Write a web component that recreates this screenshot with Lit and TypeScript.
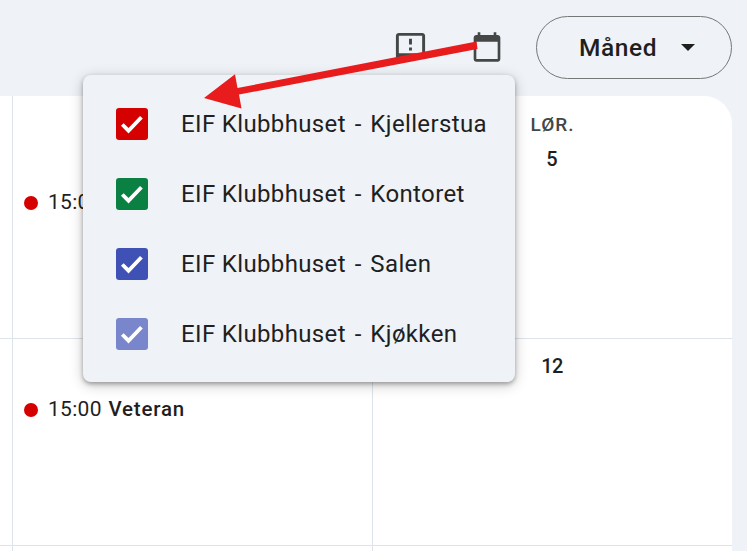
import { LitElement, html, css } from "lit";
import { customElement } from "lit/decorators.js";

const calendars = [
  { room: "Kjellerstua", tone: "red" },
  { room: "Kontoret", tone: "green" },
  { room: "Salen", tone: "blue" },
  { room: "Kjøkken", tone: "lavender" },
];

@customElement("app-root")
export class AppRoot extends LitElement {
  static styles = css`
    :host {
      display: flex;
      flex-direction: column;
      position: relative;
      width: 747px;
      height: 551px;
      overflow: hidden;
      background: #eff3f8;
      color: #1f1f1f;
      font-family: Roboto, "Liberation Sans", sans-serif;
    }
    * { box-sizing: border-box; }
    svg { display: block; }
    .toolbar {
      flex: none;
      height: 96px;
      display: flex;
      justify-content: flex-end;
      padding: 16px 15px 0 0;
    }
    .feedback { width: 35px; height: 35px; margin: 14px 43.3px 0 0; fill: #444746; }
    .toggle { width: 32px; height: 32px; margin: 15.4px 33px 0 0; fill: #444746; }
    .view {
      width: 196px;
      height: 63px;
      border: 1px solid #747775;
      border-radius: 32px;
      display: flex;
      align-items: center;
      padding-left: 42px;
      font-size: 24.5px;
      font-weight: 500;
    }
    .view-name { width: 79px; letter-spacing: 0.6px; white-space: nowrap; }
    .caret { margin-left: 23px; width: 14px; height: 7px; fill: #1f1f1f; }
    .grid {
      width: 732px;
      height: 455px;
      background: #fff;
      border-radius: 0 28px 0 0;
      display: grid;
      grid-template-columns: 13px 360px 359px;
      grid-template-rows: 243px 207px 5px;
    }
    .cell { border-right: 1px solid #dde3ea; border-bottom: 1px solid #dde3ea; }
    .cell.end { border-right: 0; }
    .cell.last { border-bottom: 0; }
    .event {
      display: flex;
      align-items: center;
      height: 24px;
      padding-left: 11px;
      font-size: 21px;
      white-space: nowrap;
    }
    .first .event { margin-top: 94px; }
    .second .event { margin-top: 58px; }
    .dot { width: 14px; height: 14px; border-radius: 50%; background: #d50000; margin: 2px 10px 0 0; }
    .time { width: 60.5px; letter-spacing: 0.3px; }
    .title { font-weight: 500; font-size: 20.5px; letter-spacing: 0.8px; }
    .weekday { width: 359px; padding-top: 17px; text-align: center; font-size: 19px; line-height: 24px; font-weight: 500; letter-spacing: 1px; color: #444746; }
    .date { width: 358px; text-align: center; font-size: 20px; line-height: 24px; font-weight: 500; }
    .first .date { margin-top: 10px; }
    .second .date { margin-top: 15px; letter-spacing: -0.5px; }
    .menu {
      position: absolute;
      left: 83px;
      top: 75px;
      width: 432px;
      height: 307px;
      padding-top: 14px;
      background: #eff3f8;
      border-radius: 8px;
      box-shadow: 0 2px 4px rgba(0,0,0,.3), 0 3px 14px rgba(0,0,0,.22);
    }
    .option { height: 70px; display: flex; align-items: center; padding-left: 33px; font-size: 24px; letter-spacing: 0.36px; white-space: nowrap; }
    .dash { margin: 0 2.3px 0 2.5px; }
    .box { width: 32px; height: 32px; border-radius: 3px; margin-right: 33px; }
    .red { background: #d50000; }
    .green { background: #0b8043; }
    .blue { background: #3f51b5; }
    .lavender { background: #7986cb; }
    .check { fill: none; stroke: #fff; stroke-width: 3.8; }
    .arrow { position: absolute; left: 0; top: 0; width: 747px; height: 120px; fill: #e81c1c; pointer-events: none; }
  `;

  private event() {
    return html`<div class="event"><span class="dot"></span><span class="time">15:00</span><span class="title">Veteran</span></div>`;
  }

  render() {
    return html`
      <header class="toolbar">
        <svg class="feedback" viewBox="0 0 24 24"><path d="M20 2H4c-1.1 0-2 .9-2 2v18l4-4h14c1.1 0 2-.9 2-2V4c0-1.1-.9-2-2-2zm0 14H4V4h16v12zM11 12h2v2h-2zM11 6h2v4h-2z"/></svg>
        <svg class="toggle" viewBox="0 0 24 24"><path d="M20 3h-1V1h-2v2H7V1H5v2H4c-1.1 0-2 .9-2 2v16c0 1.1.9 2 2 2h16c1.1 0 2-.9 2-2V5c0-1.1-.9-2-2-2zm0 18H4V8h16v13z"/></svg>
        <div class="view"><span class="view-name">Måned</span><svg class="caret" viewBox="0 0 14 7"><path d="M0 0h14L7 7z"/></svg></div>
      </header>
      <main class="grid">
        <div class="cell"></div>
        <div class="cell first">${this.event()}</div>
        <div class="cell first end"><div class="weekday">LØR.</div><div class="date">5</div></div>
        <div class="cell"></div>
        <div class="cell second">${this.event()}</div>
        <div class="cell second end"><div class="date">12</div></div>
        <div class="cell last"></div>
        <div class="cell last"></div>
        <div class="cell last end"></div>
      </main>
      <div class="menu">
        ${calendars.map((c) => html`
          <div class="option">
            <span class="box ${c.tone}"><svg class="check" viewBox="0 0 32 32"><path d="M6.300 16.500l6.200 6.200L25.400 9.200"/></svg></span>
            <span>EIF Klubbhuset <span class="dash">-</span> ${c.room}</span>
          </div>`)}
      </div>
      <svg class="arrow" viewBox="0 0 747 120"><path d="M204 98L235 74.300 237.500 88 476.500 41.500 477.500 49 239 94.500 241.500 108.500z"/></svg>
    `;
  }
}
